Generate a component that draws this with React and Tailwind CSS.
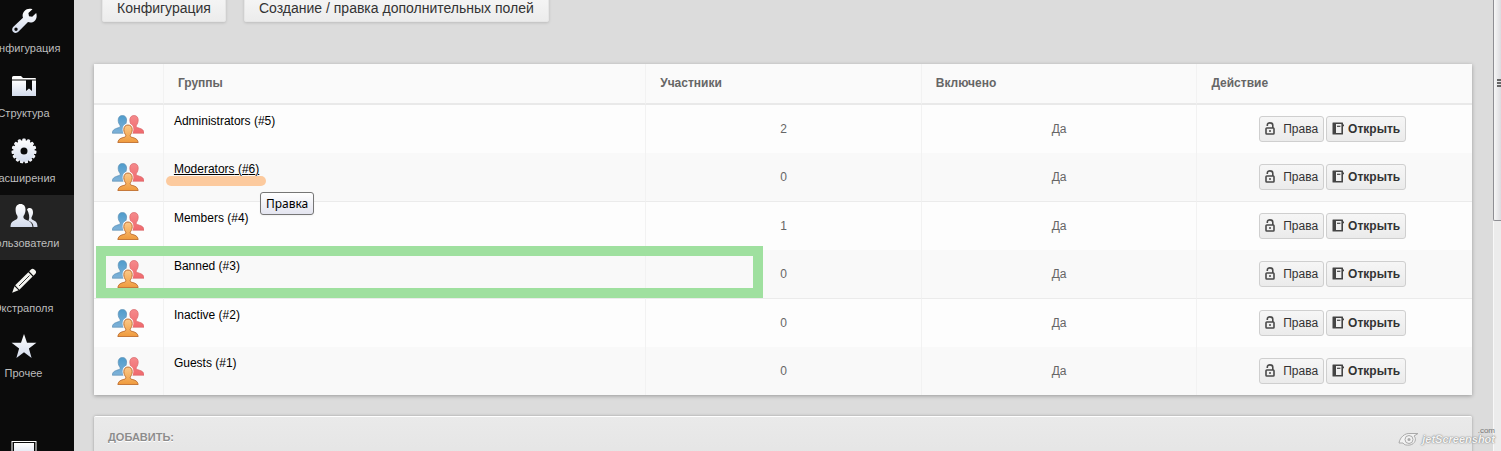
import { useState } from 'react';

const groups = [
  { id: 5, name: 'Administrators', members: 2 },
  { id: 6, name: 'Moderators', members: 0 },
  { id: 4, name: 'Members', members: 1 },
  { id: 3, name: 'Banned', members: 0 },
  { id: 2, name: 'Inactive', members: 0 },
  { id: 1, name: 'Guests', members: 0 },
];

const WrenchIcon = () => (
  <svg viewBox="0 0 26 26" className="size-[26px] fill-[url(#menuFill)]">
    <path
      fillRule="evenodd"
      d="M21.500 1.200 17.400 5l.6 3.200 3.200.6 4-3.800c1 3.500.3 6.200-1.600 7.900-1.900 1.700-4.200 2-6.600 1.200L7.600 23.600c-1.400 1.600-3.800 1.800-5.300.5-1.600-1.500-1.500-4 .1-5.400L12 9.800c-.9-2.700-.2-5 1.500-6.900C15.500.8 18.300.2 21.500 1.200ZM5 19.600a1.700 1.700 0 1 0 0 3.400 1.700 1.700 0 0 0 0-3.400Z"
    />
  </svg>
);

const FolderIcon = () => (
  <svg viewBox="0 0 26 26" className="size-[26px]">
    <path d="M1 5.500V4.500Q1 3 2.500 3H10l2 2h12q1 0 1 1v.5H1Z" className="fill-white" />
    <path d="M1 7.500h14V18l3-2.500 3 2.500V7.500h4V23H1Z" className="fill-[url(#menuFill)]" />
  </svg>
);

const teeth = [0, 24, 48, 72, 96, 120, 144, 168, 192, 216, 240, 264, 288, 312, 336];

const GearIcon = () => (
  <svg viewBox="0 0 26 26" className="size-[26px]">
    <g className="fill-[#f1f3f8]">
      {teeth.map((a) => (
        <rect key={a} x="11.300" y="0.500" width="3.400" height="5" rx="1" transform={`rotate(${a} 13 13)`} />
      ))}
    </g>
    <path
      fillRule="evenodd"
      d="M13 2.300a10.700 10.700 0 1 0 0 21.400 10.700 10.700 0 0 0 0-21.400Zm0 7.200a3.500 3.500 0 1 1 0 7 3.500 3.500 0 0 1 0-7Z"
      className="fill-[url(#menuFill)]"
    />
  </svg>
);

const UsersIcon = () => (
  <svg viewBox="0 0 28 26" className="h-[26px] w-[28px] fill-[url(#menuFill)]">
    <path d="M17 6.500c1-1.300 2-1.700 3-1.500 2.300.3 3 2.300 3 4.500 0 2-.7 3.400-1.300 4.500-.6 1.200-.3 2.200.8 2.800 2.500 1.300 5 1.800 5 7.200h-4c-.3-3.300-1.600-4.900-5-6.200 1.700-3.800.4-7.500-1.500-11.300Z" />
    <path d="M10.500 1c3.400 0 5 2.300 5 5.700 0 2.500-.7 4.400-1.700 5.800-.8 1.200-.4 3 1 3.700 4 1.800 7.200 2.300 7.700 7.800H.5c.2-5.300 2.300-5.700 5.800-7.500 1.400-.7 1.600-2.700.9-3.900-.9-1.400-1.600-3.200-1.600-5.900C5.600 3.300 7.200 1 10.500 1Z" />
  </svg>
);

const PencilIcon = () => (
  <svg viewBox="0 0 26 26" className="size-[26px] fill-[#f4f4f0]">
    <path d="m18.200 3.200 1.800-1.800c1-.9 2.400-.8 3.300.1l1.100 1.100c.9.900.9 2.300 0 3.200l-1.900 1.900Z" />
    <path d="m17.300 4.200 4.300 4.400L8.400 21.700l-4.200-4.400Z" />
    <path d="m3.500 18.200 4 4.100L1.200 24.700Z" />
    <path d="m8 18 10.500-10.500" stroke="#0b0b0b" strokeWidth="0.800" />
  </svg>
);

const StarIcon = () => (
  <svg viewBox="0 0 26 26" className="size-[26px] fill-[url(#menuFill)]">
    <path d="m13 1 3 8.700 9.400.1-7.500 5.700L20.600 25 13 19.300 5.400 25l2.700-9.500L.6 9.800l9.400-.1Z" />
  </svg>
);

const ScreenIcon = () => (
  <svg viewBox="0 0 26 26" className="size-[26px]">
    <rect x="1" y="1.500" width="24" height="18" fill="none" stroke="#fff" />
    <rect x="3" y="3" width="20" height="15" className="fill-[url(#menuFill)]" />
  </svg>
);

const menu = [
  { label: 'Конфигурация', Icon: WrenchIcon },
  { label: 'Структура', Icon: FolderIcon },
  { label: 'Расширения', Icon: GearIcon },
  { label: 'Пользователи', Icon: UsersIcon, active: true },
  { label: 'Экстраполя', Icon: PencilIcon },
  { label: 'Прочее', Icon: StarIcon },
];

const bust =
  'M0 .5c2.700 0 4.200 1.900 4.200 4.600 0 2.200-.8 3.900-1.700 5.100-.6 1-.3 2 .8 2.400 3.400 1 6.500 1.600 6.800 5.600H-10.100c.3-4 3.400-4.600 6.800-5.600 1.100-.4 1.400-1.400.8-2.400C-3.400 9-4.200 7.300-4.200 5.100-4.200 2.400-2.700.5 0 .5Z';

const GroupIcon = () => (
  <svg viewBox="0 0 32 28" className="mx-auto h-[28px] w-[32px]">
    <path d={bust} transform="translate(10.400 0)" fill="url(#blueBust)" stroke="#5b8fb5" strokeWidth="0.700" />
    <path d={bust} transform="translate(22 0)" fill="url(#redBust)" stroke="#d9696c" strokeWidth="0.700" />
    <path d={bust} transform="translate(16 9.500)" fill="none" stroke="#fff" strokeWidth="2.500" />
    <path d={bust} transform="translate(16 9.500)" fill="url(#orangeBust)" stroke="#b5652a" strokeWidth="0.900" />
  </svg>
);

const LockIcon = () => (
  <svg viewBox="0 0 10 13" className="mb-0.5 h-[13px] w-[10px]" fill="none" stroke="#4a4a4a" strokeWidth="1.600">
    <path d="M2.300 4V3.200C2.300 1.700 3.400.9 5 .9s2.800.8 2.800 2.300V6" />
    <rect x="1" y="6" width="8" height="6" rx="0.800" />
    <path d="M4 9h2" />
  </svg>
);

const BookIcon = () => (
  <svg viewBox="0 0 12 13" className="mb-0.5 h-[13px] w-[12px]">
    <path
      fillRule="evenodd"
      d="M1 .5h9.500q.5 0 .5.500v1.500h1v1.800h-1v7.700q0 .5-.5.500H1q-.5 0-.5-.5V1Q.5.500 1 .5ZM4 2v9h5.400V2Z"
      fill="#444"
    />
    <path d="M5 4.300h3.400" stroke="#444" strokeWidth="1.200" />
  </svg>
);

const Gradients = () => (
  <svg aria-hidden="true" className="absolute size-0">
    <defs>
      <linearGradient id="menuFill" x1="0" y1="0" x2="0" y2="1">
        <stop offset="0" stopColor="#ffffff" />
        <stop offset="1" stopColor="#d3dbec" />
      </linearGradient>
      <linearGradient id="blueBust" x1="0" y1="0" x2="0" y2="1">
        <stop offset="0" stopColor="#4f9ccc" />
        <stop offset="1" stopColor="#7fb2d8" />
      </linearGradient>
      <linearGradient id="redBust" x1="0" y1="0" x2="0" y2="1">
        <stop offset="0" stopColor="#f58a8c" />
        <stop offset="1" stopColor="#f0696d" />
      </linearGradient>
      <linearGradient id="orangeBust" x1="0" y1="0" x2="0" y2="1">
        <stop offset="0" stopColor="#fbc98a" />
        <stop offset="1" stopColor="#ef9a3c" />
      </linearGradient>
    </defs>
  </svg>
);

const Sidebar = () => (
  <nav className="w-[74px] shrink-0 bg-[#0b0b0b]">
    {menu.map(({ label, Icon, active }) => (
      <a
        key={label}
        href="#"
        className={`flex h-[65px] flex-col items-center pt-2 pr-[27px] text-[11px] leading-4 whitespace-nowrap text-[#bdbdbd] ${
          active ? 'bg-[#232323]' : ''
        }`}
      >
        <Icon />
        <span className="mt-1.5">{label}</span>
      </a>
    ))}
    <a href="#" aria-label="Сайт" className="mt-[42px] flex h-[65px] flex-col items-center pt-2 pr-[27px]">
      <ScreenIcon />
    </a>
  </nav>
);

const toolbarButton =
  'h-7 rounded-xs border border-[#e6e6e6] bg-linear-to-b from-[#f6f6f6] to-[#ececec] px-3.5 text-[14px] text-[#333] shadow-[0_1px_3px_rgba(0,0,0,0.15)]';

const rowButton =
  'flex h-[26px] items-center rounded-[3px] border border-[#cfcfcf] bg-linear-to-b from-[#f6f6f6] to-[#ebebeb] px-[5px] text-[12px] text-[#333]';

const GroupRow = ({ group, index, hovered, marked }) => {
  const even = index % 2 === 1;
  const cell = `border-l border-l-[#f2f2f2] first:border-l-0 ${even && index < 5 ? 'border-b border-b-[#ebebeb]' : ''}`;

  return (
    <tr className={`relative ${even ? 'h-[49px] last:h-12 bg-[#f9f9f9]' : 'h-12 bg-[#fdfdfd]'}`}>
      <td className={cell}>
        <GroupIcon />
        {marked && (
          <div className="pointer-events-none absolute -top-1 left-0.5 z-10 h-[52px] w-[667px] border-10 border-[#9fe09f]" />
        )}
      </td>
      <td className={`${cell} pt-2 pl-2.5 align-top`}>
        <a href="#" className={`relative block w-fit leading-4 text-black ${hovered ? 'underline' : ''}`}>
          {group.name} (#{group.id})
          {hovered && (
            <>
              <span className="absolute top-[15px] -left-2 h-2.5 w-[100px] rounded-full bg-[#fcca9e]" />
              <span
                role="tooltip"
                className="absolute top-[31px] left-[86px] z-10 inline-block h-[23px] rounded-[3px] border border-[#767676] bg-linear-to-b from-white to-[#e4e5f0] px-[5px] font-['Noto_Sans',sans-serif] leading-[21px] shadow-xs"
              >
                Правка
              </span>
            </>
          )}
        </a>
      </td>
      <td className={`${cell} text-center`}>{group.members}</td>
      <td className={`${cell} text-center`}>Да</td>
      <td className={cell}>
        <div className="flex justify-center gap-0.5 pr-1">
          <button type="button" className={`${rowButton} gap-2`}>
            <LockIcon />
            Права
          </button>
          <button type="button" className={`${rowButton} gap-1 font-bold`}>
            <BookIcon />
            Открыть
          </button>
        </div>
      </td>
    </tr>
  );
};

const headCell =
  'border-b-2 border-l border-b-[#e9e9e9] border-l-[#f2f2f2] px-3.5 pb-0.5 text-left font-bold first:border-l-0';

const Watermark = () => (
  <div className="pointer-events-none absolute right-1.5 bottom-1 z-20 flex items-center gap-0.5 text-[11px] leading-4 text-[#f4f4f4]">
    <svg viewBox="0 0 22 14" className="h-[14px] w-[22px]" fill="none">
      <path d="M1 11C2 5 7 1 12 1.500h8L16 4c3 3 1 8-4 9-3 .5-6 0-7-2Z" stroke="#aaa" fill="#f2f2f2" />
      <circle cx="11" cy="7.500" r="4" stroke="#aaa" />
      <circle cx="11" cy="7.500" r="1.500" fill="#aaa" />
    </svg>
    <span className="font-bold italic [text-shadow:0_0_1px_#777,0_0_2px_#999]">jetScreenshot</span>
    <span className="absolute -top-1 right-0 text-[8px] leading-2 text-[#777]">.com</span>
  </div>
);

const Scrollbar = () => (
  <div className="flex w-2 shrink-0 flex-col border-l border-[#f8f8f8] bg-[#ececec]">
    <div className="-ml-px flex h-[221px] flex-col items-end gap-px rounded-bl-xs border-b border-l border-[#8e8e93] bg-linear-to-r from-[#f6f6f6] to-[#dcdce0] pt-[79px]">
      <i className="h-0.5 w-1 bg-[#666]" />
      <i className="h-0.5 w-1 bg-[#666]" />
      <i className="h-0.5 w-1 bg-[#666]" />
    </div>
  </div>
);

const App = () => {
  const [hovered, setHovered] = useState(6);

  return (
    <div className="relative flex h-screen overflow-hidden bg-[#dcdcdc] font-['Liberation_Sans',Arial,sans-serif] text-[12px] text-[#666]">
      <Gradients />
      <Sidebar />

      <main className="min-w-0 flex-1 pr-[21px] pl-5">
        {/* Toolbar */}
        <div className="-mt-1.5 flex gap-[18px] pl-2">
          <button type="button" className={toolbarButton}>Конфигурация</button>
          <button type="button" className={toolbarButton}>Создание / правка дополнительных полей</button>
        </div>

        {/* Groups */}
        <table className="mt-[42px] w-full table-fixed border-separate border-spacing-0 bg-[#fafafa] shadow-[0_1px_4px_rgba(0,0,0,0.3)]">
          <thead>
            <tr className="h-[41px]">
              <th className={`${headCell} w-[5%]`}></th>
              <th className={`${headCell} w-[35%]`}>Группы</th>
              <th className={`${headCell} w-[20%]`}>Участники</th>
              <th className={`${headCell} w-[20%]`}>Включено</th>
              <th className={`${headCell} w-[20%]`}>Действие</th>
            </tr>
          </thead>
          <tbody onClick={() => setHovered(null)}>
            {groups.map((group, i) => (
              <GroupRow key={group.id} group={group} index={i} hovered={hovered === group.id} marked={group.id === 3} />
            ))}
          </tbody>
        </table>

        {/* Add form */}
        <section className="mt-[21px] h-24 rounded-t-xs border-t border-white bg-linear-to-b from-[#eaeaea] to-[#dedede] px-3.5 pt-3 shadow-[0_0_3px_rgba(0,0,0,0.3)]">
          <h2 className="text-[11px] leading-4 font-bold text-[#8c8c8c] uppercase [text-shadow:0_1px_0_#fff]">Добавить:</h2>
        </section>
      </main>

      <Scrollbar />
      <Watermark />
    </div>
  );
};

export default App;
